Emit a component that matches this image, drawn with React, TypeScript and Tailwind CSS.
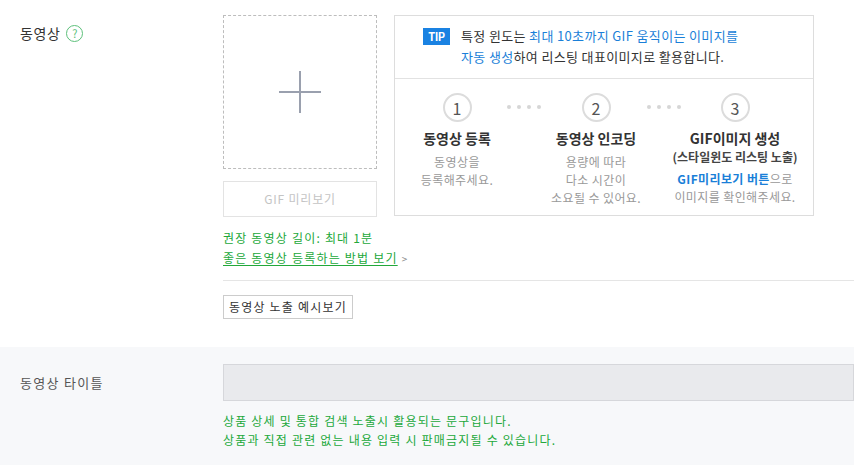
import { Fragment } from "react";

const font = { fontFamily: '"Noto Sans CJK KR", "Noto Sans", sans-serif' };

type Step = {
  no: number;
  title: string;
  sub?: string;
  lines: React.ReactNode[];
};

const steps: Step[] = [
  { no: 1, title: "동영상 등록", lines: ["동영상을", "등록해주세요."] },
  { no: 2, title: "동영상 인코딩", lines: ["용량에 따라", "다소 시간이", "소요될 수 있어요."] },
  {
    no: 3,
    title: "GIF이미지 생성",
    sub: "(스타일윈도 리스팅 노출)",
    lines: [
      <Fragment key="a">
        <span className="font-bold text-[#1a7fd8]">GIF미리보기 버튼</span>으로
      </Fragment>,
      "이미지를 확인해주세요.",
    ],
  },
];

const Dots = ({ className }: { className: string }) => (
  <div className={`absolute top-[26px] flex gap-[6px] ${className}`}>
    {[0, 1, 2, 3].map((i) => (
      <span key={i} className="h-[4px] w-[4px] rounded-full bg-[#d6d6d6]" />
    ))}
  </div>
);

const TipBox = () => (
  <div className="h-[201px] w-[420px] border border-[#dddddd]">
    {/* tip header */}
    <div className="flex h-[63px] gap-[11px] border-b border-[#e2e2e2] pl-[28px] pt-[9px]">
      <span className="mt-[3px] flex h-[17px] w-[27px] items-center justify-center bg-[#1a82e2] text-[11px] font-bold leading-none tracking-[-0.5px] text-white">
        TIP
      </span>
      <p className="text-[13px] leading-[21px] tracking-[0.35px] text-[#333]">
        특정 윈도는{" "}
        <span className="text-[#1a7fd8]">최대 10초까지 GIF 움직이는 이미지를</span>
        <br />
        <span className="text-[#1a7fd8]">자동 생성</span>하여 리스팅 대표이미지로 활용합니다.
      </p>
    </div>
    {/* steps */}
    <div className="relative flex gap-[15px] pt-[14px]">
      <Dots className="left-[112px]" />
      <Dots className="left-[252px]" />
      {steps.map((s) => (
        <div key={s.no} className="flex w-[124px] flex-col items-center text-center">
          <div className="flex h-[29px] w-[29px] items-center justify-center rounded-full border-2 border-[#dcdcdc] text-[16px] text-[#555]">
            {s.no}
          </div>
          <p className="mt-[6px] whitespace-nowrap text-[14px] font-bold leading-[20px] text-[#333]">
            {s.title}
          </p>
          {s.sub && (
            <p className="whitespace-nowrap text-[12px] font-bold leading-[18px] text-[#444]">
              {s.sub}
            </p>
          )}
          <div className={s.sub ? "mt-[4px]" : "mt-[5px]"}>
            {s.lines.map((l, i) => (
              <p
                key={i}
                className="whitespace-nowrap text-[12px] leading-[18px] tracking-[0.4px] text-[#999]"
              >
                {l}
              </p>
            ))}
          </div>
        </div>
      ))}
    </div>
  </div>
);

export default function App() {
  return (
    <div className="min-h-[465px] w-[854px] overflow-hidden bg-white" style={font}>
      {/* video row */}
      <section className="flex pt-[15px]">
        <div className="flex w-[223px] shrink-0 items-start gap-[6px] pl-[20px] pt-[8px]">
          <span className="text-[14px] leading-[20px] tracking-[0.6px] text-[#333]">동영상</span>
          <span className="mt-[2px] flex h-[17px] w-[17px] items-center justify-center rounded-full border border-[#5cc07a] text-[11px] leading-none text-[#5cc07a]">
            ?
          </span>
        </div>
        <div className="flex-1">
          <div className="flex gap-[17px]">
            <div className="w-[154px]">
              <div className="flex h-[154px] items-center justify-center border border-dashed border-[#bdbdbd]">
                <svg width="42" height="42" viewBox="0 0 42 42">
                  <path d="M21 0v42M0 21h42" stroke="#9aa0ae" strokeWidth="2" />
                </svg>
              </div>
              <button
                type="button"
                className="mt-[12px] h-[36px] w-full border border-[#e3e3e3] text-[12px] tracking-[0.8px] text-[#c4c4c4]"
              >
                GIF 미리보기
              </button>
            </div>
            <TipBox />
          </div>
          <div className="mt-[11px] text-[12px] leading-[20px] tracking-[1.2px] text-[#22a83a]">
            <p>권장 동영상 길이: 최대 1분</p>
            <p>
              <span className="underline underline-offset-2">좋은 동영상 등록하는 방법 보기</span>
              <span className="ml-[4px] text-[10px] text-[#888]">&gt;</span>
            </p>
          </div>
          <div className="mt-[11px] border-t border-[#e5e5e5] pt-[12px] pb-[28px]">
            <button
              type="button"
              className="h-[24px] border border-[#cccccc] px-[5px] text-[12px] leading-none tracking-[1.2px] text-[#333]"
            >
              동영상 노출 예시보기
            </button>
          </div>
        </div>
      </section>
      {/* title row */}
      <section className="flex bg-[#f7f8fa] pt-[17px] pb-[20px]">
        <div className="flex h-[37px] w-[223px] shrink-0 items-center pl-[20px] text-[13px] tracking-[1.3px] text-[#555]">
          동영상 타이틀
        </div>
        <div className="flex-1">
          <div className="h-[37px] w-full border border-[#d6d7db] bg-[#e9eaed]" />
          <div className="mt-[10px] text-[12px] leading-[19px] tracking-[1.2px] text-[#22a83a]">
            <p>상품 상세 및 통합 검색 노출시 활용되는 문구입니다.</p>
            <p>상품과 직접 관련 없는 내용 입력 시 판매금지될 수 있습니다.</p>
          </div>
        </div>
      </section>
    </div>
  );
}
